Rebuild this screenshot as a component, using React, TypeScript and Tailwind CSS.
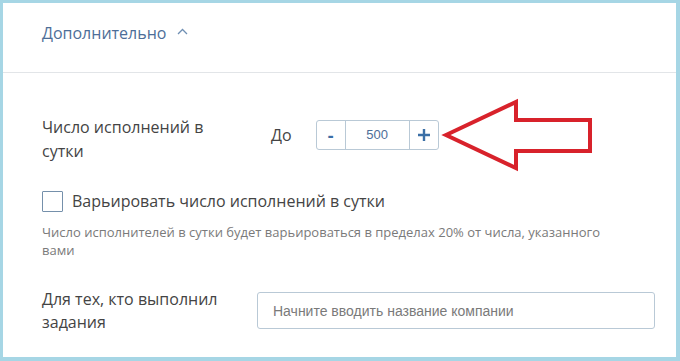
export default function App() {
  return (
    <div className="relative w-[680px] h-[361px] overflow-hidden bg-[#a6d6e5]">
      <div
        className="absolute left-[3px] top-[3px] w-[673px] h-[354px] bg-white"
        style={{ fontFamily: '"Open Sans", "Noto Sans", sans-serif' }}
      >
        {/* header */}
        <div className="h-[70px] border-b border-[#e2e5e8] pl-[39px] pt-[19px]">
          <div className="flex items-center gap-[11px] text-[16px] leading-[22px] text-[#4d6e98]">
            <span>Дополнительно</span>
            <svg width="11" height="7" viewBox="0 0 11 7" fill="none" className="mb-[3px]">
              <path d="M1 6 L5.5 1.5 L10 6" stroke="#6f8fb3" strokeWidth="1.3" />
            </svg>
          </div>
        </div>

        <div className="pl-[39px]">
          {/* row 1 */}
          <div className="flex items-start pt-[42px]">
            <div className="w-[229px] text-[16px] leading-[24px] text-[#444]">
              Число исполнений в<br />сутки
            </div>
            <div className="flex items-center gap-[24px] pt-[5px]">
              <span className="text-[16px] text-[#444]">До</span>
              <div className="flex h-[30px] rounded-[3px] border border-[#b9c9d6]">
                <button className="w-[28px] flex items-center justify-center text-[#3b6fa6] text-[18px] font-bold">
                  -
                </button>
                <div
                  className="w-[65px] border-x border-[#b9c9d6] flex items-center justify-center text-[13px] text-[#4d6e98]"
                  style={{ fontFamily: '"Liberation Sans", Arial, sans-serif' }}
                >
                  500
                </div>
                <button className="w-[28px] flex items-center justify-center">
                  <svg width="14" height="14" viewBox="0 0 14 14">
                    <path d="M7 1 V13 M1 7 H13" stroke="#3b6fa6" strokeWidth="2.4" />
                  </svg>
                </button>
              </div>
            </div>
          </div>

          {/* checkbox */}
          <label className="flex items-center gap-[9px] mt-[27px]">
            <span className="w-[21px] h-[21px] border border-[#7590ab] rounded-[1px] bg-white"></span>
            <span className="text-[16px] leading-[22px] text-[#444]">
              Варьировать число исполнений в сутки
            </span>
          </label>
          <p className="mt-[11px] w-[600px] text-[13px] leading-[18px] text-[#7a7a7a]">
            Число исполнителей в сутки будет варьироваться в пределах 20% от числа, указанного
            <br />
            вами
          </p>

          {/* row 3 */}
          <div className="flex items-start mt-[29px]">
            <div className="w-[215px] text-[16px] leading-[23px] text-[#444]">
              Для тех, кто выполнил
              <br />
              задания
            </div>
            <input
              placeholder="Начните вводить название компании"
              className="mt-[4px] w-[398px] h-[37px] rounded-[3px] border border-[#b9c9d6] px-[15px] text-[14px] text-[#444] placeholder:text-[#7a7a7a] outline-none"
              style={{ fontFamily: '"Liberation Sans", Arial, sans-serif' }}
            />
          </div>
        </div>
      </div>

      {/* annotation arrow */}
      <svg
        className="absolute left-0 top-0 pointer-events-none"
        width="680"
        height="361"
        viewBox="0 0 680 361"
      >
        <path
          d="M446 135 L516 102 L516 120 L590 120 L590 151 L516 151 L516 168 Z"
          fill="none"
          stroke="#d8222b"
          strokeWidth="4"
          strokeLinejoin="miter"
        />
      </svg>
    </div>
  );
}
